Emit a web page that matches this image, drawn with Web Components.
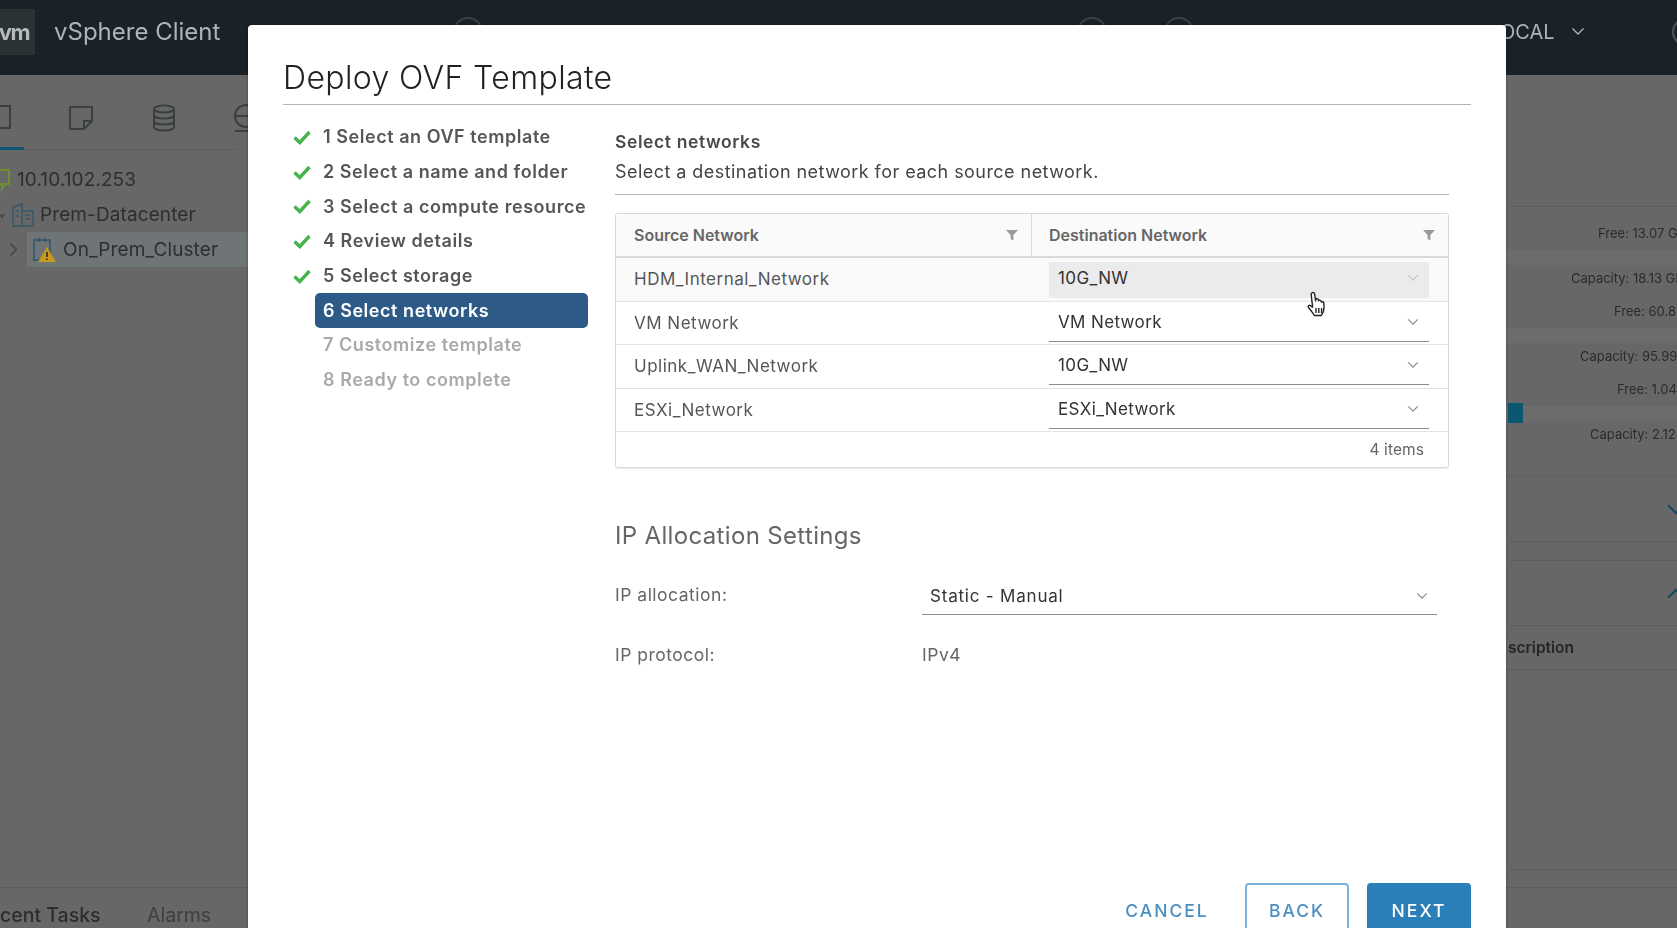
<!DOCTYPE html>
<html>
<head>
<meta charset="utf-8">
<title>Deploy OVF Template</title>
<style>
  html, body { margin: 0; height: 100%; overflow: hidden; background: #676767; }
  body { font-family: "Inter", "Liberation Sans", sans-serif; }
</style>
</head>
<body>
<vs-backdrop></vs-backdrop>
<vs-wizard heading="Deploy OVF Template">
  <wizard-step slot="steps" state="done">1 Select an OVF template</wizard-step>
  <wizard-step slot="steps" state="done">2 Select a name and folder</wizard-step>
  <wizard-step slot="steps" state="done">3 Select a compute resource</wizard-step>
  <wizard-step slot="steps" state="done">4 Review details</wizard-step>
  <wizard-step slot="steps" state="done">5 Select storage</wizard-step>
  <wizard-step slot="steps" state="active">6 Select networks</wizard-step>
  <wizard-step slot="steps" state="todo">7 Customize template</wizard-step>
  <wizard-step slot="steps" state="todo">8 Ready to complete</wizard-step>

  <network-page></network-page>

  <vs-button slot="actions" kind="flat">CANCEL</vs-button>
  <vs-button slot="actions" kind="outline">BACK</vs-button>
  <vs-button slot="actions" kind="primary">NEXT</vs-button>
</vs-wizard>

<script>
const CHEVRON = `<svg width="14" height="9" viewBox="0 0 14 9" fill="none" stroke="currentColor" stroke-width="1.4"><path d="M1.5 1.5 7 7l5.5-5.5"/></svg>`
const FILTER = `<svg width="14" height="14" viewBox="0 0 14 14"><path d="M1 2h12L8.4 7v5.4L5.6 11V7z" fill="#9a9a9a"/></svg>`

class VsBackdrop extends HTMLElement {
  constructor () {
    super()
    this.root = this.attachShadow({ mode: 'open' })
  }

  connectedCallback() {
    // lignes de stockage du panneau de droite, masquées en partie par la modale
    const stats = [
      ['Free: 13.07 GB', 92], ['Capacity: 18.13 GB', 65], ['Free: 60.8', 108],
      ['Capacity: 95.99', 74], ['Free: 1.04', 111], ['Capacity: 2.12', 84]
    ]
    let rows = ''
    stats.forEach(s => {
      rows += `<div class="stat" style="padding-left:${s[1]}px">${s[0]}</div>`
    })

    this.root.innerHTML = `
      <style>
        :host {
          display: flex;
          flex-direction: column;
          height: 928px;
          overflow: hidden;
          color: #2f2f2f;
          font-family: "Inter", "Liberation Sans", sans-serif;
          filter: blur(.5px);
        }
        .top {
          height: 75px;
          flex: none;
          box-sizing: border-box;
          padding-bottom: 12px;
          background: #182227;
          color: #aeb4b7;
          display: flex;
          align-items: center;
          position: relative;
          overflow: hidden;
        }
        .logo {
          width: 35px;
          height: 46px;
          flex: none;
          background: #2a3236;
          display: flex;
          align-items: center;
          justify-content: flex-end;
          box-sizing: border-box;
          padding-right: 6px;
          font-weight: 700;
          font-size: 22px;
          letter-spacing: -1.5px;
          overflow: hidden;
          color: #b5b9bb;
        }
        .brand { margin-left: 19px; font-size: 24px; font-weight: 400; width: 1446px; flex: none; }
        .user { font-size: 20px; display: flex; align-items: center; gap: 16px; width: 172px; flex: none; }
        .ring { width: 24px; height: 24px; border: 2px solid #4b5356; border-radius: 50%; flex: none; }
        .ghost { position: absolute; top: 17px; width: 26px; height: 26px; border: 2px solid #3a4246; border-radius: 50%; }
        .main { flex: 1; display: flex; min-height: 0; }
        .side { width: 248px; flex: none; }
        .icons { height: 75px; box-sizing: border-box; border-bottom: 1px solid #5c5c5c; display: flex; align-items: center; margin-right: 12px; color: #3a3f42; position: relative; }
        .icons svg { position: relative; top: 6px; flex: none; }
        .icons::after { content: ""; position: absolute; left: 0; width: 24px; bottom: -1px; height: 3px; background: #0f5473; }
        .tree { padding-top: 12px; font-size: 19px; letter-spacing: .1px; color: #2e2e2e; }
        .node { height: 35px; display: flex; align-items: center; }
        .node svg { flex: none; }
        .twist { width: 27px; flex: none; display: flex; justify-content: center; color: #444; }
        .sel { background: #6f7476; flex: 1; height: 100%; display: flex; align-items: center; padding-left: 6px; }
        .center { flex: 1; }
        .right { width: 171px; flex: none; font-size: 13px; color: #2b2b2b; overflow: hidden; white-space: nowrap; }
        .hero { height: 132px; border-bottom: 1px solid #5d5d5d; box-sizing: border-box; margin-left: 4px; }
        .stat { height: 33px; line-height: 26px; }
        .stat:nth-child(odd) { height: 45px; background: linear-gradient(#676767 30px, #6c6c6c 30px, #6c6c6c 45px); }
        .statbox { padding-top: 13px; position: relative; height: 270px; box-sizing: border-box; border-bottom: 1px solid #5f5f5f; }
        .bar { position: absolute; left: 2px; top: 196px; width: 15px; height: 20px; background: #0d566f; }
        .fold { height: 65px; border-bottom: 1px solid #5b5b5b; display: flex; align-items: center; justify-content: flex-end; color: #0e4a60; overflow: hidden; margin-left: 4px; box-sizing: border-box; }
        .fold svg { margin-right: -9px; width: 20px; height: 13px; }
        .fold.up svg { transform: scaleY(-1); }
        .gap { height: 19px; border-bottom: 1px solid #5b5b5b; box-sizing: border-box; margin-left: 4px; }
        .desc { height: 44px; line-height: 44px; border-bottom: 1px solid #5b5b5b; font-weight: 600; font-size: 15.5px; color: #252525; box-sizing: border-box; padding-left: 2px; }
        .tail { height: 200px; border-bottom: 1px solid #5b5b5b; box-sizing: border-box; margin-left: 4px; }
        .tabs { height: 41px; flex: none; border-top: 1px solid #5b5b5b; display: flex; align-items: center; font-size: 19.500px; box-sizing: border-box; padding-top: 13px; overflow: hidden; }
        .tabs span { color: #2d2d2d; font-weight: 500; width: 147px; flex: none; }
        .tabs span + span { color: #3f3f3f; font-weight: 400; }
      </style>
      <div class="top">
        <div class="logo">vm</div>
        <div class="brand">vSphere Client</div>
        <div class="user">OCAL ${CHEVRON}</div>
        <div class="ring"></div>
        <div class="ghost" style="left:453px"></div>
        <div class="ghost" style="left:1077px"></div>
        <div class="ghost" style="left:1164px"></div>
      </div>
      <div class="main">
        <div class="side">
          <div class="icons">
            <svg width="12" height="28" viewBox="0 0 12 28" fill="none" stroke="currentColor" stroke-width="2"><path d="M0 2h10v22H0M4 2v-1"/></svg>
            <svg style="margin-left:56px" width="26" height="26" viewBox="0 0 26 26" fill="none" stroke="currentColor" stroke-width="2"><path d="M2 2h22v14l-8 8H2zM24 16h-8v8"/></svg>
            <svg style="margin-left:58px" width="24" height="28" viewBox="0 0 24 28" fill="none" stroke="currentColor" stroke-width="2"><ellipse cx="12" cy="5" rx="10" ry="3.5"/><path d="M2 5v18c0 2 4 3.5 10 3.5s10-1.500 10-3.500V5M2 11c0 2 4 3.500 10 3.500S22 13 22 11M2 17c0 2 4 3.500 10 3.500S22 19 22 17"/></svg>
            <svg style="margin-left:56px" width="20" height="28" viewBox="0 0 20 28" fill="none" stroke="currentColor" stroke-width="2"><circle cx="14" cy="12" r="11"/><path d="M3 12h20M3 27h20"/></svg>
          </div>
          <div class="tree">
            <div class="node">
              <svg width="17" height="26" viewBox="0 0 17 26" fill="none" stroke="#6f8f2c" stroke-width="2"><path d="M-4 3h13v14H5l-3 5v-5h-6"/></svg>10.10.102.253
            </div>
            <div class="node">
              <svg style="margin-right:6px" width="34" height="24" viewBox="0 0 34 24" fill="none" stroke="#38586a" stroke-width="1.500"><path d="M13 23V4l9-3v22zM22 8h11v15H13M25 12h5M25 16h5M16 8h3M16 13h3"/><path d="M-1 11l3 3 2-3" stroke="#444"/></svg>Prem-Datacenter
            </div>
            <div class="node">
              <div class="twist"><svg width="9" height="15" viewBox="0 0 9 15" fill="none" stroke="currentColor" stroke-width="1.500"><path d="M1.500 1.500 7.500 7.500 1.500 13.500"/></svg></div>
              <div class="sel">
                <svg style="margin-right:6px" width="24" height="26" viewBox="0 0 24 26" fill="none"><path d="M1 3h16v20H1z" stroke="#2e5770" stroke-width="1.500"/><path d="M6 1v4M12 1v4" stroke="#2e5770" stroke-width="1.500"/><path d="M14 10l9 15H5z" fill="#c79a1c"/><path d="M14 15v5M14 21.500v1.500" stroke="#222" stroke-width="1.500"/></svg>On_Prem_Cluster
              </div>
            </div>
          </div>
        </div>
        <div class="center"></div>
        <div class="right">
          <div class="hero"></div>
          <div class="statbox">${rows}<div class="bar"></div></div>
          <div class="fold">${CHEVRON}</div>
          <div class="gap"></div>
          <div class="fold up">${CHEVRON}</div>
          <div class="desc">scription</div>
          <div class="tail"></div>
        </div>
      </div>
      <div class="tabs"><span>cent Tasks</span><span>Alarms</span></div>
    `
  }
}
customElements.define('vs-backdrop', VsBackdrop)

class VsWizard extends HTMLElement {
  constructor () {
    super()
    this.root = this.attachShadow({ mode: 'open' })
  }

  connectedCallback() {
    this.root.innerHTML = `
      <style>
        :host {
          display: flex;
          flex-direction: column;
          position: absolute;
          left: 248px;
          top: 25px;
          width: 1258px;
          height: 903px;
          overflow: hidden;
          box-sizing: border-box;
          padding: 0 35px;
          background: #fff;
          border-radius: 4px 4px 0 0;
          box-shadow: 0 0 3px rgba(0,0,0,.35);
          font-family: "Inter", "Liberation Sans", sans-serif;
          filter: blur(.3px);
        }
        h1 {
          margin: 0;
          height: 80px;
          box-sizing: border-box;
          padding-top: 27px;
          line-height: 52px;
          font-size: 32px;
          letter-spacing: .37px;
          font-weight: 300;
          color: #222;
          border-bottom: 1px solid #b3b3b3;
          flex: none;
        }
        .body { flex: 1; display: flex; min-height: 0; padding-top: 15px; margin-right: 22px; }
        nav { width: 305px; flex: none; margin-right: 27px; display: flex; flex-direction: column; }
        .content { flex: 1; min-width: 0; margin-top: 5.5px; }
        .actions { flex: none; display: flex; justify-content: flex-end; align-items: flex-start; height: 45px; gap: 18px; }
      </style>
      <h1>${this.getAttribute('heading')}</h1>
      <div class="body">
        <nav><slot name="steps"></slot></nav>
        <div class="content"><slot></slot></div>
      </div>
      <div class="actions"><slot name="actions"></slot></div>
    `
  }
}
customElements.define('vs-wizard', VsWizard)

class WizardStep extends HTMLElement {
  constructor () {
    super()
    this.root = this.attachShadow({ mode: 'open' })
  }

  connectedCallback() {
    const state = this.getAttribute('state')
    this.root.innerHTML = `
      <style>
        :host {
          display: flex;
          height: 34.7px;
          font-size: 18px;
          letter-spacing: .55px;
          font-weight: 600;
          color: #565656;
        }
        .mark { width: 32px; flex: none; display: flex; align-items: center; padding-left: 10px; box-sizing: border-box; }
        .label {
          flex: 1;
          display: flex;
          align-items: center;
          padding: 0 0 1px 8px;
          border-radius: 5px;
          white-space: nowrap;
        }
        :host([state=active]) .label { background: #2e5a87; color: #fff; }
        :host([state=todo]) .label { color: #a9a9a9; }
      </style>
      <div class="mark">
        ${state === 'done' ? '<svg width="18" height="15" viewBox="0 0 18 15" fill="none" stroke="#46b34b" stroke-width="3.400"><path d="M1.500 7.500 6.800 12.500 16.500 2"/></svg>' : ''}
      </div>
      <div class="label"><slot></slot></div>
    `
  }
}
customElements.define('wizard-step', WizardStep)

class VsSelect extends HTMLElement {
  constructor () {
    super()
    this.root = this.attachShadow({ mode: 'open' })
  }

  connectedCallback() {
    this.root.innerHTML = `
      <style>
        :host {
          display: flex;
          align-items: center;
          justify-content: space-between;
          box-sizing: border-box;
          height: 36px;
          padding: 0 10px 3px 9px;
          border-bottom: 1px solid #8c8c8c;
          font-size: 17px;
          letter-spacing: .37px;
          color: #333;
          white-space: nowrap;
        }
        :host([hovered]) { background: #ebebeb; border-bottom-color: #ebebeb; }
        :host([hovered]) svg { color: #c4c4c4; }
        svg { color: #8a8a8a; width: 12px; height: 8px; }
      </style>
      <slot></slot>${CHEVRON}
    `
  }
}
customElements.define('vs-select', VsSelect)

class NetworkTable extends HTMLElement {
  constructor () {
    super()
    this.root = this.attachShadow({ mode: 'open' })
  }

  connectedCallback() {
    const items = [
      ['HDM_Internal_Network', '10G_NW', true],
      ['VM Network', 'VM Network'],
      ['Uplink_WAN_Network', '10G_NW'],
      ['ESXi_Network', 'ESXi_Network']
    ]

    let childs = ''
    items.forEach(item => {
      childs += `
        <div class="row ${item[2] ? 'hover' : ''}">
          <div class="src">${item[0]}</div>
          <div class="dst"><vs-select ${item[2] ? 'hovered' : ''}>${item[1]}</vs-select></div>
        </div>
      `
    })

    this.root.innerHTML = `
      <style>
        :host {
          display: block;
          border: 1px solid #d8d8d8;
          border-radius: 3px;
          box-shadow: 0 1px 1px rgba(0,0,0,.08);
          font-size: 17px;
          color: #565656;
          position: relative;
        }
        .row, .head { display: grid; grid-template-columns: 415px 1fr; }
        .head {
          height: 42px;
          background: #fafafa;
          border-bottom: 2px solid #d9d9d9;
          font-size: 16px;
          font-weight: 600;
          color: #666;
        }
        .head > div { display: flex; align-items: center; justify-content: space-between; padding: 0 12px 0 18px; }
        .head > div + div { border-left: 1px solid #dcdcdc; padding-left: 17px; padding-right: 12px; }
        .row { height: 43.500px; box-sizing: border-box; border-bottom: 1px solid #e4e4e4; align-items: center; }
        .row.hover { background: #fafafa; }
        .row:last-of-type { border-bottom: 2px solid #dcdcdc; }
        .src { padding-left: 18px; letter-spacing: .5px; }
        .dst { padding: 2px 19px 0 18px; }
        .foot { height: 35px; display: flex; align-items: center; justify-content: flex-end; padding-right: 24px; font-size: 15.500px; letter-spacing: .1px; color: #666; }
        svg.hand { position: absolute; left: 690px; top: 77px; }
      </style>
      <div class="head">
        <div>Source Network ${FILTER}</div>
        <div>Destination Network ${FILTER}</div>
      </div>
      ${childs}
      <div class="foot">4 items</div>
      <svg class="hand" width="22" height="28" viewBox="0 0 22 28" fill="#fff" stroke="#222" stroke-width="1.400" stroke-linejoin="round"><path d="M6 1.800c1-.8 2.400-.2 2.600 1l1 7 .2-1.500c.5-1 2.200-1 2.500.2l.3 1.300c.5-1 2.200-.9 2.500.3l.2 1c.8-.8 2.300-.4 2.500.8.400 2.800.300 6-.3 8.300-.4 1.800-1.300 3-2.300 4.300H8.500c-1.500-2.400-3.500-5-6-8-.9-1.200.4-2.800 1.800-2l2.300 1.700L5.200 3.500c-.1-.7.2-1.300.8-1.700z"/><path d="M10 17v5M12.800 17v5M15.600 17v5" fill="none"/></svg>
    `
  }
}
customElements.define('network-table', NetworkTable)

class NetworkPage extends HTMLElement {
  constructor () {
    super()
    this.root = this.attachShadow({ mode: 'open' })
  }

  connectedCallback() {
    this.root.innerHTML = `
      <style>
        :host { display: block; color: #565656; }
        .title { font-size: 17.500px; letter-spacing: .6px; font-weight: 600; color: #4a4a4a; height: 31px; line-height: 31px; }
        .desc { font-size: 18px; letter-spacing: .45px; color: #444; height: 37.700px; line-height: 30px; border-bottom: 1px solid #b5b5b5; margin-bottom: 18px; }
        h2 { margin: 48px 0 0; font-size: 24px; letter-spacing: .34px; font-weight: 400; color: #666; line-height: 40px; }
        .field { display: grid; grid-template-columns: 307px 515px; font-size: 17.500px; letter-spacing: .5px; color: #666; }
        .alloc { margin-top: 22px; height: 47px; }
        .alloc > div:first-child { padding-top: 6px; }
        .proto { height: 40px; align-items: center; margin-top: 9.500px; }
        .field vs-select { height: 37px; padding: 0 9px 1px 8px; letter-spacing: .8px; }
      </style>
      <div class="title">Select networks</div>
      <div class="desc">Select a destination network for each source network.</div>
      <network-table></network-table>
      <h2>IP Allocation Settings</h2>
      <div class="field alloc">
        <div>IP allocation:</div>
        <vs-select>Static - Manual</vs-select>
      </div>
      <div class="field proto">
        <div>IP protocol:</div>
        <div>IPv4</div>
      </div>
    `
  }
}
customElements.define('network-page', NetworkPage)

class VsButton extends HTMLElement {
  constructor () {
    super()
    this.root = this.attachShadow({ mode: 'open' })
  }

  connectedCallback() {
    this.root.innerHTML = `
      <style>
        :host {
          display: flex;
          align-items: flex-start;
          justify-content: center;
          box-sizing: border-box;
          width: 104px;
          height: 60px;
          padding-top: 18px;
          border-radius: 4px;
          font-size: 17.500px;
          font-weight: 500;
          letter-spacing: 2px;
          line-height: 20px;
          color: #4a8fc0;
          flex: none;
        }
        :host([kind=outline]) { border: 2px solid #7ab2d8; padding-top: 16px; }
        :host([kind=primary]) { background: #2b7fb8; color: #fff; }
        :host([kind=flat]) { width: 120px; }
      </style>
      <slot></slot>
    `
  }
}
customElements.define('vs-button', VsButton)
</script>
</body>
</html>
